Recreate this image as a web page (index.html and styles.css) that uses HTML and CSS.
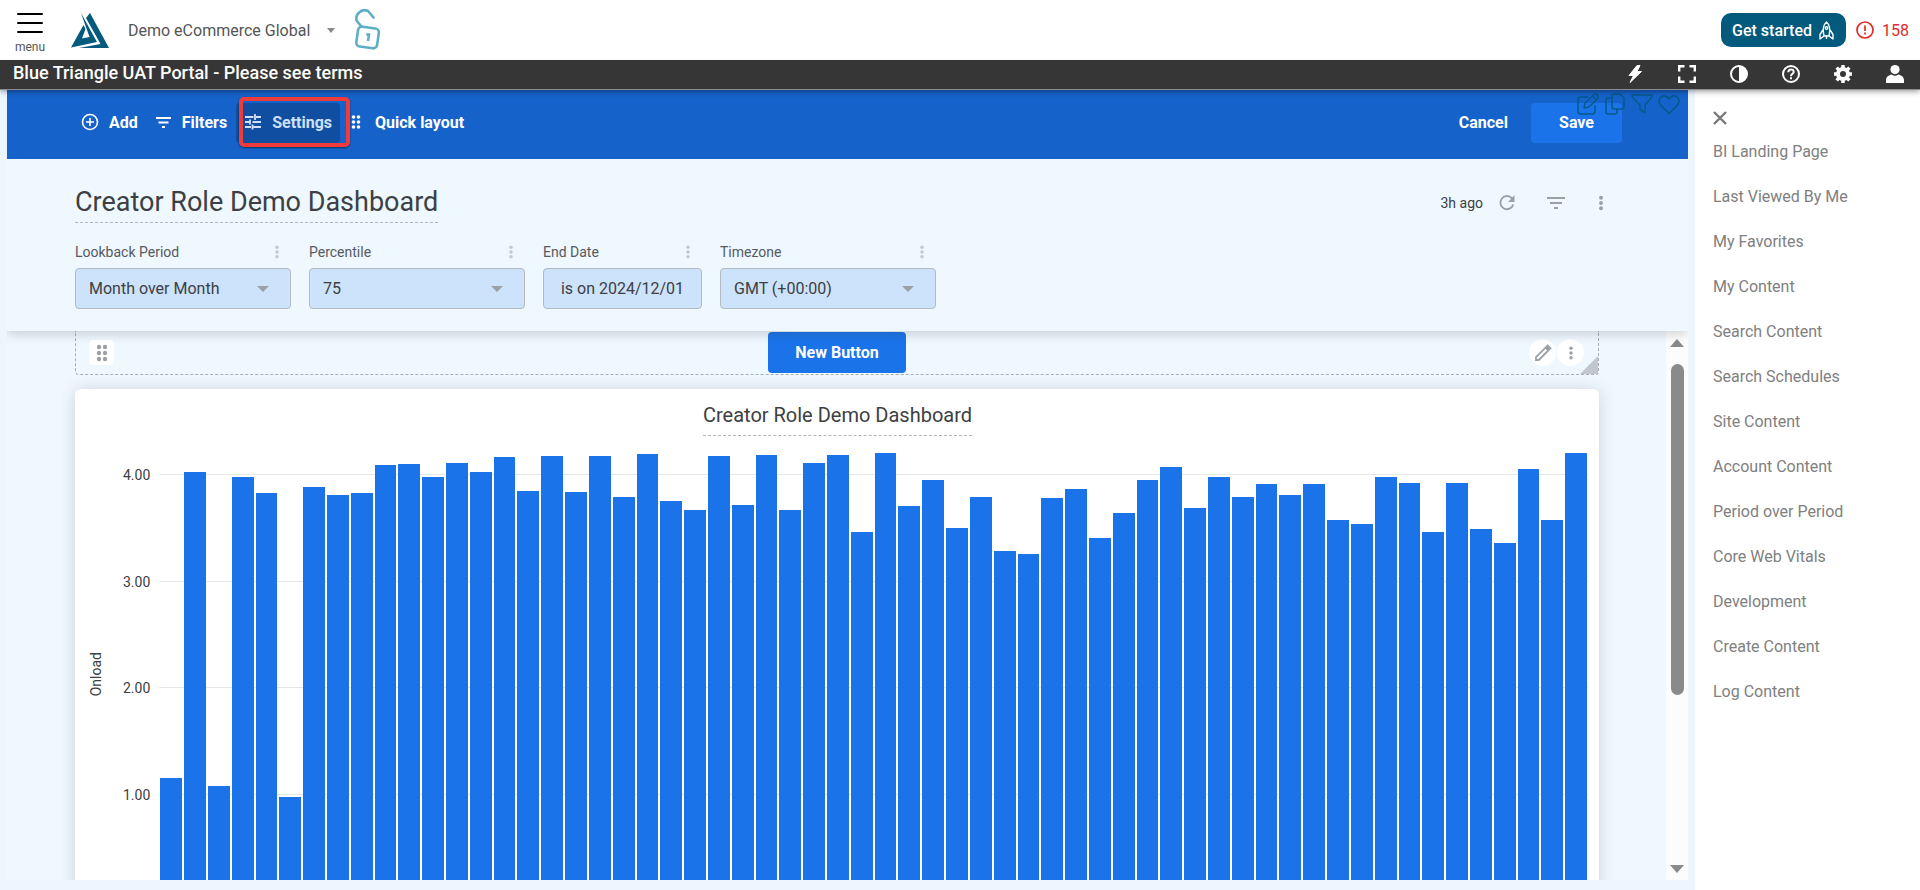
FILE: index.html
```html
<!DOCTYPE html>
<html lang="en">
<head>
<meta charset="utf-8">
<title>Creator Role Demo Dashboard</title>
<link rel="stylesheet" href="styles.css">
</head>
<body>
<svg class="symbols" aria-hidden="true">
  <symbol id="kebab" viewBox="0 0 24 24"><circle cx="12" cy="5" r="2.6"/><circle cx="12" cy="12" r="2.6"/><circle cx="12" cy="19" r="2.6"/></symbol>
  <symbol id="grip" viewBox="0 0 12 18"><circle cx="3" cy="3" r="2.2"/><circle cx="9" cy="3" r="2.2"/><circle cx="3" cy="9" r="2.2"/><circle cx="9" cy="9" r="2.2"/><circle cx="3" cy="15" r="2.2"/><circle cx="9" cy="15" r="2.2"/></symbol>
  <symbol id="lines" viewBox="0 0 18 12"><path d="M0 0h18v2H0zM3 5h12v2H3zM7 10h4v2H7z"/></symbol>
</svg>

<header class="topbar">
  <button class="menu-btn" type="button">
    <svg width="26" height="22" viewBox="0 0 26 22" stroke="#000" stroke-width="2" stroke-linecap="round"><path d="M1 2h24M1 11h24M1 20h24"/></svg>
    <span>menu</span>
  </button>
  <a class="logo" href="#" aria-label="Blue Triangle">
    <svg width="38" height="35" viewBox="0 0 38 35" fill="#035a7d"><path d="M19 0 38 35H8L29.500 31 15 5Z"/><path d="M10 0 26 29 0 34.500 12.500 12 14.500 16 11 25.500 18.500 24Z"/></svg>
  </a>
  <button class="site-btn" type="button"><span>Demo eCommerce Global</span><i class="caret-s"></i></button>
  <svg class="lock" width="27" height="42" viewBox="0 0 27 42" fill="none" stroke="#5eafc6" stroke-width="2.600" stroke-linecap="round" stroke-linejoin="round"><path d="M7 17 2.500 11.500C1 5 8 -1 14 2L19.500 8.500"/><rect x="3" y="18.500" width="21" height="20" rx="4" transform="rotate(8 13.500 29)"/><path d="M12.300 25.500h2.700l-1 6.500" stroke-linecap="butt" stroke-linejoin="miter"/></svg>
  <button class="start-btn" type="button"><span>Get started</span>
    <svg width="15" height="19" viewBox="0 0 15 19" fill="none" stroke="#fff" stroke-width="1.400" stroke-linejoin="round"><path d="M5 15C3.500 9 4 4 7.500 1 11 4 11.500 9 10 15ZM3.900 9 1 13.500V18l4-3M11.100 9 14 13.500V18l-4-3M7.500 14v4"/><circle cx="7.500" cy="7" r="1.300"/></svg>
  </button>
  <a class="alerts" href="#">
    <svg width="18" height="18" viewBox="0 0 18 18" fill="none" stroke="#e02b2b" stroke-width="1.700"><circle cx="9" cy="9" r="8"/><path d="M9 4.500v5.500M9 11.500v2"/></svg>
    <span>158</span>
  </a>
</header>

<div class="portal">
  <strong class="portal-name">Blue Triangle UAT Portal - Please see terms</strong>
  <nav class="portal-tools">
    <a href="#" aria-label="Actions"><svg viewBox="0 0 18 18" fill="#fff"><path d="M11 .5 3 10.500h4.500L4 17.500 15.500 6.500H11L14 .5Z" stroke="#fff" stroke-linejoin="round"/></svg></a>
    <a href="#" aria-label="Full screen"><svg viewBox="0 0 18 18" fill="none" stroke="#fff" stroke-width="2.400"><path d="M1.200 6.500V1.200h5.300M11.500 1.200h5.300v5.300M16.800 11.500v5.300h-5.300M6.500 16.800H1.200v-5.300"/></svg></a>
    <a href="#" aria-label="Contrast"><svg viewBox="0 0 18 18"><circle cx="9" cy="9" r="8" fill="none" stroke="#fff" stroke-width="2"/><path d="M9 1a8 8 0 0 1 0 16Z" fill="#fff"/></svg></a>
    <a href="#" aria-label="Help"><svg viewBox="0 0 18 18" fill="none" stroke="#fff" stroke-width="2"><circle cx="9" cy="9" r="8"/><path d="M6.300 7.200C6.300 3.400 11.800 3.600 11.700 7 11.600 8.800 9 8.800 9 11.200M9 12.300v2"/></svg></a>
    <a href="#" aria-label="Settings"><svg viewBox="0 0 18 18"><circle cx="9" cy="9" r="5" fill="none" stroke="#fff" stroke-width="4"/><path d="M9 0v3M9 15v3M0 9h3M15 9h3M2.600 2.600l2.200 2.200M13.200 13.200l2.200 2.200M2.600 15.400l2.200-2.200M13.200 4.800l2.200-2.200" stroke="#fff" stroke-width="3.400"/></svg></a>
    <a href="#" aria-label="Account"><svg viewBox="0 0 18 18" fill="#fff"><circle cx="9" cy="4.600" r="4.600"/><path d="M0 18v-3C0 12 3 10 5.500 9.500Q9 12 12.500 9.500C15 10 18 12 18 15v3Z"/></svg></a>
  </nav>
</div>

<div class="shell">
  <main class="dash">
    <div class="toolbar">
      <button class="tool" type="button"><svg width="18" height="18" viewBox="0 0 18 18" fill="none" stroke="#fff" stroke-width="1.600"><circle cx="9" cy="9" r="7.500"/><path d="M9 5v8M5 9h8"/></svg>Add</button>
      <button class="tool" type="button"><svg width="18" height="12" viewBox="0 0 18 12" fill="#fff"><path d="M2 1h15v2H2zM4.500 5.500h10v2h-10zM8 10h3v2H8z"/></svg>Filters</button>
      <button class="tool active" type="button"><svg width="18" height="18" viewBox="0 0 18 18" fill="none" stroke="#cfe0f8" stroke-width="1.800"><path d="M1 4h8.500M12 4h5M11 1v6M1 9h5M8.500 9H17M6 6.500v5M1 14h6M9 14h8M8.500 11.500v5"/></svg>Settings</button>
      <button class="tool quick" type="button"><svg width="10" height="16" fill="#fff"><use href="#grip"/></svg>Quick layout</button>
      <span class="marker"></span>
      <span class="grow"></span>
      <button class="cancel" type="button">Cancel</button>
      <button class="save" type="button">Save</button>
      <div class="float">
        <svg viewBox="0 0 22 22"><path d="M11 4H4a3 3 0 0 0-3 3v11a3 3 0 0 0 3 3h11a3 3 0 0 0 3-3v-6M7 15l1-5 9-8.500q2-1 3.500.5t.5 3.500L12 14ZM15.500 3l3.500 3.500"/></svg>
        <svg viewBox="0 0 22 22"><path d="M8 5H4a2 2 0 0 0-2 2v12a2 2 0 0 0 2 2h7a2 2 0 0 0 2-2v-3M10 1h6l4 4v9a2 2 0 0 1-2 2h-8a2 2 0 0 1-2-2V3a2 2 0 0 1 2-2Z"/></svg>
        <svg viewBox="0 0 22 22"><path d="M1 2h20q0 2-1 3l-6 7v7.500l-5-3V12L2 5Q1 4 1 2Z"/></svg>
        <svg viewBox="0 0 22 22"><path d="M11 20.500 2.500 12C-1 7 3 2 7 3q2.500.5 4 3 1.500-2.500 4-3c4-1 8 4 4.500 9Z"/></svg>
      </div>
    </div>

    <section class="head">
      <div class="head-row">
        <h1>Creator Role Demo Dashboard</h1>
        <div class="head-tools">
          <span class="ago">3h ago</span>
          <button type="button" aria-label="Refresh"><svg width="18" height="18" viewBox="0 0 18 18"><path d="M15.300 10.500A6.600 6.600 0 1 1 14 4.300" fill="none" stroke="#9aa0a6" stroke-width="1.800"/><path d="M16.500 1v7H10Z" fill="#9aa0a6"/></svg></button>
          <button type="button" aria-label="Filters"><svg width="18" height="12" fill="#9aa0a6"><use href="#lines"/></svg></button>
          <button type="button" aria-label="More"><svg width="18" height="18" fill="#9aa0a6"><use href="#kebab"/></svg></button>
        </div>
      </div>
      <div class="filters">
        <div class="field"><div class="field-top"><label for="lookback">Lookback Period</label><svg width="16" height="16"><use href="#kebab"/></svg></div>
          <div class="pick"><select id="lookback"><option>Month over Month</option></select></div></div>
        <div class="field"><div class="field-top"><label for="pct">Percentile</label><svg width="16" height="16"><use href="#kebab"/></svg></div>
          <div class="pick"><select id="pct"><option>75</option></select></div></div>
        <div class="field date"><div class="field-top"><label for="end">End Date</label><svg width="16" height="16"><use href="#kebab"/></svg></div>
          <button id="end" class="date-btn" type="button">is on 2024/12/01</button></div>
        <div class="field"><div class="field-top"><label for="tz">Timezone</label><svg width="16" height="16"><use href="#kebab"/></svg></div>
          <div class="pick"><select id="tz"><option>GMT (+00:00)</option></select></div></div>
      </div>
    </section>

    <div class="canvas">
      <div class="tiles">
        <div class="tile">
          <button class="grip" type="button" aria-label="Move tile"><svg width="12" height="18" fill="#9aa0a6"><use href="#grip"/></svg></button>
          <button class="new-btn" type="button">New Button</button>
          <div class="tile-tools">
            <button type="button" aria-label="Edit tile"><svg width="18" height="18" viewBox="0 0 18 18" fill="none" stroke="#9aa0a6" stroke-width="1.800"><path d="M2 16v-2.800L11.500 3.700l2.800 2.800L4.800 16ZM12.500 2.700l1.200-1.200 2.800 2.800-1.200 1.200Z"/></svg></button>
            <button type="button" aria-label="Tile menu"><svg width="16" height="16" fill="#9aa0a6"><use href="#kebab"/></svg></button>
          </div>
          <i class="resize"></i>
        </div>
        <article class="card">
          <h2>Creator Role Demo Dashboard</h2>
          <div class="chart">
            <span class="axis-name">Onload</span>
            <div class="plot">
              <span class="tick t4">4.00</span><i class="line t4"></i>
              <span class="tick t3">3.00</span><i class="line t3"></i>
              <span class="tick t2">2.00</span><i class="line t2"></i>
              <span class="tick t1">1.00</span><i class="line t1"></i>
              <div class="bars" id="bars"></div>
            </div>
          </div>
        </article>
      </div>
      <div class="scrollbar"><i class="up"></i><i class="thumb"></i><i class="down"></i></div>
    </div>
  </main>

  <aside class="side">
    <button class="close" type="button" aria-label="Close"><svg width="14" height="14" viewBox="0 0 14 14" stroke="#777" stroke-width="2.400"><path d="m1 1 12 12M13 1 1 13"/></svg></button>
    <nav>
      <a href="#">BI Landing Page</a>
      <a href="#">Last Viewed By Me</a>
      <a href="#">My Favorites</a>
      <a href="#">My Content</a>
      <a href="#">Search Content</a>
      <a href="#">Search Schedules</a>
      <a href="#">Site Content</a>
      <a href="#">Account Content</a>
      <a href="#">Period over Period</a>
      <a href="#">Core Web Vitals</a>
      <a href="#">Development</a>
      <a href="#">Create Content</a>
      <a href="#">Log Content</a>
    </nav>
  </aside>
</div>
<script src="app.js"></script>
</body>
</html>
```
FILE: styles.css
```css
* { box-sizing: border-box; }
body { margin: 0; height: 100vh; display: flex; flex-direction: column; overflow: hidden; font-family: Roboto, "Liberation Sans", sans-serif; font-size: 16px; color: #3c4043; background: #edf6ff; }
button, select { font: inherit; color: inherit; border: 0; padding: 0; background: none; margin: 0; }
a { color: inherit; text-decoration: none; }
svg { display: block; flex: none; }
.symbols { position: absolute; width: 0; height: 0; }
.grow { flex: 1; }

.topbar { flex: none; height: 60px; background: #fff; display: flex; align-items: center; padding: 0 11px 0 16px; }
.menu-btn { display: flex; flex-direction: column; align-items: center; gap: 6px; width: 28px; font-size: 12px; line-height: 14px; color: #555; padding-top: 6px; }
.logo { margin-left: 27px; }
.site-btn { display: flex; align-items: center; gap: 17px; margin-left: 19px; color: #555; }
.caret-s { border: 4px solid transparent; border-top: 5px solid #888; border-bottom: 0; }
.lock { margin-left: 19px; }
.start-btn { margin-left: auto; height: 34px; border-radius: 10px; background: #035a7d; color: #fff; font-weight: 500; display: flex; align-items: center; gap: 7px; padding: 0 12px 0 11px; }
.alerts { display: flex; align-items: center; gap: 8px; margin-left: 10px; color: #e02b2b; }

.portal { position: relative; z-index: 3; flex: none; height: 30px; background: #363636; border-bottom: 1px solid #8d8d93; box-shadow: 0 1px 6px rgba(0,0,0,.45); clip-path: inset(0 0 -10px 0); display: flex; align-items: center; justify-content: space-between; padding: 0 16px 4px 13px; color: #fff; }
.portal-name { font-size: 18px; line-height: 22px; font-weight: 500; }
.portal-tools { display: flex; gap: 34px; padding-top: 3px; }
.portal-tools svg { width: 18px; height: 18px; }

.shell { flex: 1; min-height: 0; display: flex; }
.dash { flex: 1; min-width: 0; margin: 0 7px 10px; display: flex; flex-direction: column; }
.toolbar { position: relative; flex: none; height: 69px; background: #1563ca; display: flex; align-items: center; padding: 0 66px 3px; color: #fff; font-weight: 700; }
.toolbar button { padding-bottom: 2px; }
.toolbar .tool { height: 40px; display: flex; align-items: center; gap: 10px; padding: 0 8px 2px; border-radius: 4px; white-space: nowrap; }
.tool.active { background: #104ea2; color: #cfe0f8; margin-left: 1px; }
.toolbar .quick { gap: 14px; padding-left: 11px; }
.marker { position: absolute; left: 232px; top: 7px; width: 111px; height: 50px; border: 4px solid #f03b3b; border-radius: 5px; box-shadow: 0 1px 2px rgba(0,0,0,.5); }
.cancel { margin-right: 23px; }
.save { width: 91px; height: 40px; border-radius: 4px; background: #1a73e8; }
.float { position: absolute; right: 8px; top: 3px; display: flex; gap: 5px; }
.float svg { width: 22px; height: 22px; fill: none; stroke: #055a8a; stroke-width: 1.500; stroke-linejoin: round; }

.head { position: relative; z-index: 2; flex: none; background: #eff7ff; padding: 23px 78px 22px 68px; box-shadow: 0 3px 10px rgba(60,64,67,.22); clip-path: inset(0 0 -20px 0); }
.head-row { display: flex; justify-content: space-between; align-items: flex-start; }
h1 { margin: 0; font-size: 27px; line-height: 40px; font-weight: 400; border-bottom: 1px dashed #b0b6bc; }
.head-tools { display: flex; align-items: center; height: 41px; font-size: 14px; }
.head-tools button:nth-of-type(1) { margin: 0 31px 0 15px; }
.head-tools button:nth-of-type(2) { margin-right: 27px; }
.filters { display: flex; gap: 18px; margin-top: 19px; }
.field { width: 216px; }
.field.date { width: 159px; }
.field-top { display: flex; align-items: center; justify-content: space-between; height: 20px; margin-bottom: 6px; padding-right: 6px; font-size: 14px; color: #555b61; fill: #c3c8ce; }
.pick { display: grid; align-items: center; }
.pick > select, .pick::after { grid-area: 1 / 1; }
.pick::after { content: ""; justify-self: end; margin-right: 22px; border: 6px solid transparent; border-top-color: #9aa0a6; border-bottom: 0; pointer-events: none; }
.pick select, .date-btn { width: 100%; height: 41px; border: 1px solid #b3bac2; border-radius: 4px; background: #cde2fb; appearance: none; }
.pick select { padding: 0 40px 0 13px; }

.canvas { flex: 1; min-height: 0; display: flex; overflow: hidden; background: #eff7ff; }
.tiles { flex: 1; min-width: 0; padding: 0 67px 0 68px; }
.tile { position: relative; height: 44px; margin-bottom: 14px; border: 1px dashed #a6adb4; border-top: 0; border-radius: 0 0 4px 4px; display: flex; align-items: center; justify-content: space-between; padding: 0 14px 0 13px; }
.grip { width: 25px; height: 25px; border-radius: 4px; background: #fff; display: grid; place-items: center; }
.new-btn { position: absolute; left: 50%; translate: -50% 0; width: 138px; height: 41px; border-radius: 4px; background: #1a73e8; color: #fff; font-weight: 700; }
.tile-tools { display: flex; gap: 1px; }
.tile-tools button { width: 27px; height: 27px; border-radius: 50%; background: #fff; display: grid; place-items: center; }
.resize { position: absolute; right: 0; bottom: 0; border: 9px solid #c2c6d0; border-top-color: transparent; border-left-color: transparent; border-radius: 0 0 3px 0; }
.card { background: #fff; border-radius: 6px; box-shadow: 0 1px 16px rgba(60,64,67,.2); padding: 7px 11px 0 12px; }
h2 { width: fit-content; margin: 0 auto 12px; font-size: 20px; line-height: 39px; font-weight: 400; border-bottom: 1px dashed #b0b6bc; }
.chart { display: flex; align-items: center; gap: 18px; font-size: 14px; }
.axis-name { writing-mode: vertical-rl; rotate: 180deg; line-height: 18px; }
.plot { flex: 1; height: 452px; display: grid; grid-template-columns: auto 1fr; grid-template-rows: 26px repeat(4, 1fr); column-gap: 9px; }
.tick { grid-column: 1; line-height: 16px; margin-top: -7px; text-align: right; }
.line { grid-column: 2; border-top: 1px solid #e4e6e8; }
.t4 { grid-row: 2; }
.t3 { grid-row: 3; }
.t2 { grid-row: 4; }
.t1 { grid-row: 5; }
.bars { grid-column: 2; grid-row: 1 / -1; display: flex; align-items: flex-end; gap: 2px; padding: 0 1px; }
.bars i { flex: 1; background: #1a73e8; }

.scrollbar { flex: none; width: 22px; background: #fcfcfc; display: flex; flex-direction: column; align-items: center; padding: 8px 0 7px; }
.up, .down { border: 7px solid transparent; }
.up { border-top: 0; border-bottom: 8px solid #8a8a8a; }
.down { border-bottom: 0; border-top: 8px solid #8a8a8a; margin-top: auto; }
.thumb { width: 13px; height: 62%; margin-top: 17px; border-radius: 7px; background: #8a8a8a; }

.side { flex: none; width: 225px; background: #fff; padding: 21px 18px; color: #808080; }
.close { display: block; }
.side nav { display: flex; flex-direction: column; gap: 25px; margin-top: 17px; line-height: 20px; }
```
FILE: app.js
```js
// Onload time per interval, in seconds
const onload = [
  1.15, 4.02, 1.07, 3.97, 3.82, 0.97, 3.88, 3.80, 3.82, 4.08, 4.09, 3.97, 4.10, 4.02, 4.16,
  3.84, 4.17, 3.83, 4.17, 3.78, 4.19, 3.75, 3.66, 4.17, 3.71, 4.18, 3.66, 4.10, 4.18, 3.46,
  4.20, 3.70, 3.94, 3.49, 3.78, 3.28, 3.25, 3.77, 3.86, 3.40, 3.63, 3.94, 4.07, 3.68, 3.97,
  3.78, 3.91, 3.80, 3.91, 3.57, 3.53, 3.97, 3.92, 3.46, 3.92, 3.48, 3.35, 4.05, 3.57, 4.20
];
const axisMax = 4.244;
const bars = document.getElementById('bars');
for (const value of onload) {
  const bar = document.createElement('i');
  bar.style.height = (value / axisMax * 100) + '%';
  bars.append(bar);
}
```
